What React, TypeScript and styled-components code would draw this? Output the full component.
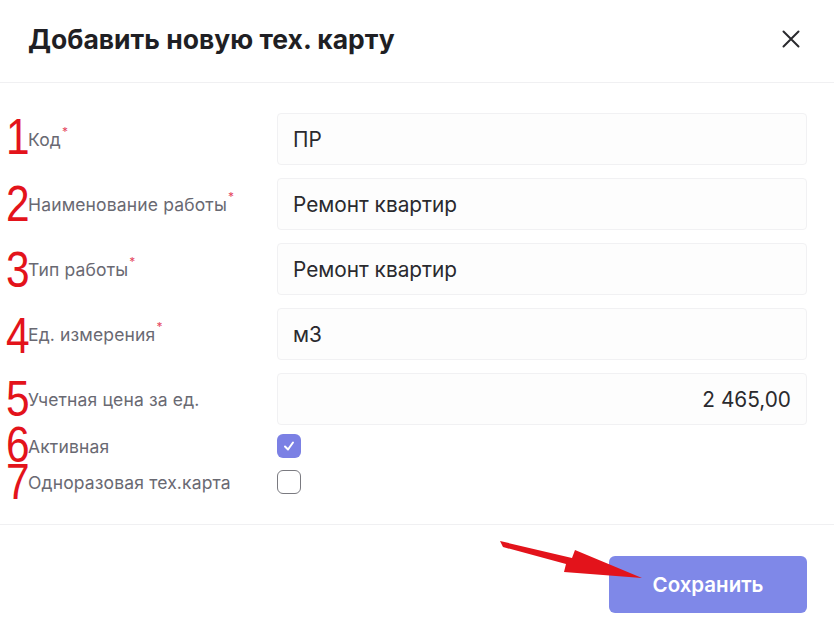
import React from "react";
import styled, { createGlobalStyle } from "styled-components";

const Global = createGlobalStyle`
  html, body { margin: 0; padding: 0; background: #fff; }
  body { font-family: Inter, "Noto Sans", sans-serif; }
  * { box-sizing: border-box; }
`;

const Modal = styled.div`
  position: relative;
  width: 834px;
  height: 639px;
  background: #fff;
  display: flex;
  flex-direction: column;
`;

const Header = styled.div`
  height: 83px;
  display: flex;
  align-items: center;
  justify-content: space-between;
  padding: 0 32px 4px 28px;
  border-bottom: 1px solid #f0f0f2;
`;

const Title = styled.h2`
  margin: 0;
  font-family: Inter, sans-serif;
  font-size: 26.5px;
  font-weight: 700;
  color: #1f1f24;
  letter-spacing: 0;
`;

const CloseBtn = styled.button`
  border: 0;
  background: none;
  padding: 0;
  width: 22px;
  height: 22px;
  display: flex;
  align-items: center;
  justify-content: center;
  cursor: pointer;
`;

const Body = styled.div`
  padding: 30px 27px 30px 28px;
  display: flex;
  flex-direction: column;
  border-bottom: 1px solid #f0f0f2;
`;

const FieldRow = styled.div`
  display: grid;
  grid-template-columns: 249px 1fr;
  align-items: center;
  height: 52px;
  margin-bottom: 13px;
  &:nth-child(5) { margin-bottom: 9px; }
`;

const CheckRow = styled.div`
  display: grid;
  grid-template-columns: 249px 1fr;
  align-items: center;
  height: 24px;
  & + & { margin-top: 12px; }
`;

const Label = styled.label`
  font-family: Inter, sans-serif;
  font-size: 17.5px;
  letter-spacing: 0.15px;
  color: #696972;
  display: flex;
  align-items: flex-start;
  white-space: nowrap;
`;

const Req = styled.span`
  color: #e5485f;
  font-size: 12px;
  line-height: 1;
  margin-left: 1px;
  margin-top: -3px;
`;

const Input = styled.div<{ $right?: boolean }>`
  height: 52px;
  border: 1px solid #f1f1f3;
  border-radius: 4px;
  background: #fdfdfd;
  display: flex;
  align-items: center;
  justify-content: ${(p) => (p.$right ? "flex-end" : "flex-start")};
  padding: 0 15px;
  font-family: Inter, sans-serif;
  font-size: 20.8px;
  color: #2a2a2e;
`;

const Check = styled.span<{ $on?: boolean }>`
  width: 24px;
  height: 24px;
  border-radius: 6px;
  display: flex;
  align-items: center;
  justify-content: center;
  background: ${(p) => (p.$on ? "#7b80e4" : "#fff")};
  border: ${(p) => (p.$on ? "none" : "1.5px solid #7a7a80")};
`;

const Footer = styled.div`
  flex: 1;
  display: flex;
  justify-content: flex-end;
  align-items: flex-start;
  padding: 31px 27px 0 0;
`;

const SaveBtn = styled.button`
  width: 198px;
  height: 57px;
  border: 0;
  border-radius: 6px;
  background: #7f88e8;
  color: #fff;
  font-family: Inter, sans-serif;
  font-size: 20.5px;
  font-weight: 600;
`;

const Num = styled.span<{ $top: number }>`
  position: absolute;
  left: 6px;
  top: ${(p) => p.$top}px;
  font-family: "Liberation Sans", sans-serif;
  font-size: 50px;
  line-height: 37px;
  height: 37px;
  color: #e3131b;
  transform: scaleX(0.85);
  transform-origin: left;
`;

const Arrow = styled.svg`
  position: absolute;
  left: 496px;
  top: 536px;
`;

const fields = [
  { label: "Код", req: true, value: "ПР" },
  { label: "Наименование работы", req: true, value: "Ремонт квартир" },
  { label: "Тип работы", req: true, value: "Ремонт квартир" },
  { label: "Ед. измерения", req: true, value: "м3" },
  { label: "Учетная цена за ед.", req: false, value: "2 465,00", right: true },
];

const numTops = [119, 186, 252, 318, 381, 427, 464];

export default function App() {
  return (
    <>
      <Global />
      <Modal>
        <Header>
          <Title>Добавить новую тех. карту</Title>
          <CloseBtn aria-label="close">
            <svg width="18" height="18" viewBox="0 0 18 18">
              <path d="M1.5 1.5 L16.5 16.5 M16.5 1.5 L1.5 16.5" stroke="#2a2a2e" strokeWidth="2" strokeLinecap="round" />
            </svg>
          </CloseBtn>
        </Header>
        <Body>
          {fields.map((f) => (
            <FieldRow key={f.label}>
              <Label>
                {f.label}
                {f.req && <Req>*</Req>}
              </Label>
              <Input $right={f.right}>{f.value}</Input>
            </FieldRow>
          ))}
          <CheckRow>
            <Label>Активная</Label>
            <Check $on>
              <svg width="14" height="14" viewBox="0 0 14 14">
                <path d="M3 7.5 L6 10.5 L11 3.5" stroke="#fff" strokeWidth="2" fill="none" strokeLinecap="round" strokeLinejoin="round" />
              </svg>
            </Check>
          </CheckRow>
          <CheckRow>
            <Label>Одноразовая тех.карта</Label>
            <Check />
          </CheckRow>
        </Body>
        <Footer>
          <SaveBtn>Сохранить</SaveBtn>
        </Footer>
        {numTops.map((t, i) => (
          <Num key={i} $top={t}>{i + 1}</Num>
        ))}
        <Arrow width="150" height="50" viewBox="0 0 150 50">
          <polygon points="4,5 7,11 70,28 68,36 146,42 79,14 76,22" fill="#e3131b" />
        </Arrow>
      </Modal>
    </>
  );
}
